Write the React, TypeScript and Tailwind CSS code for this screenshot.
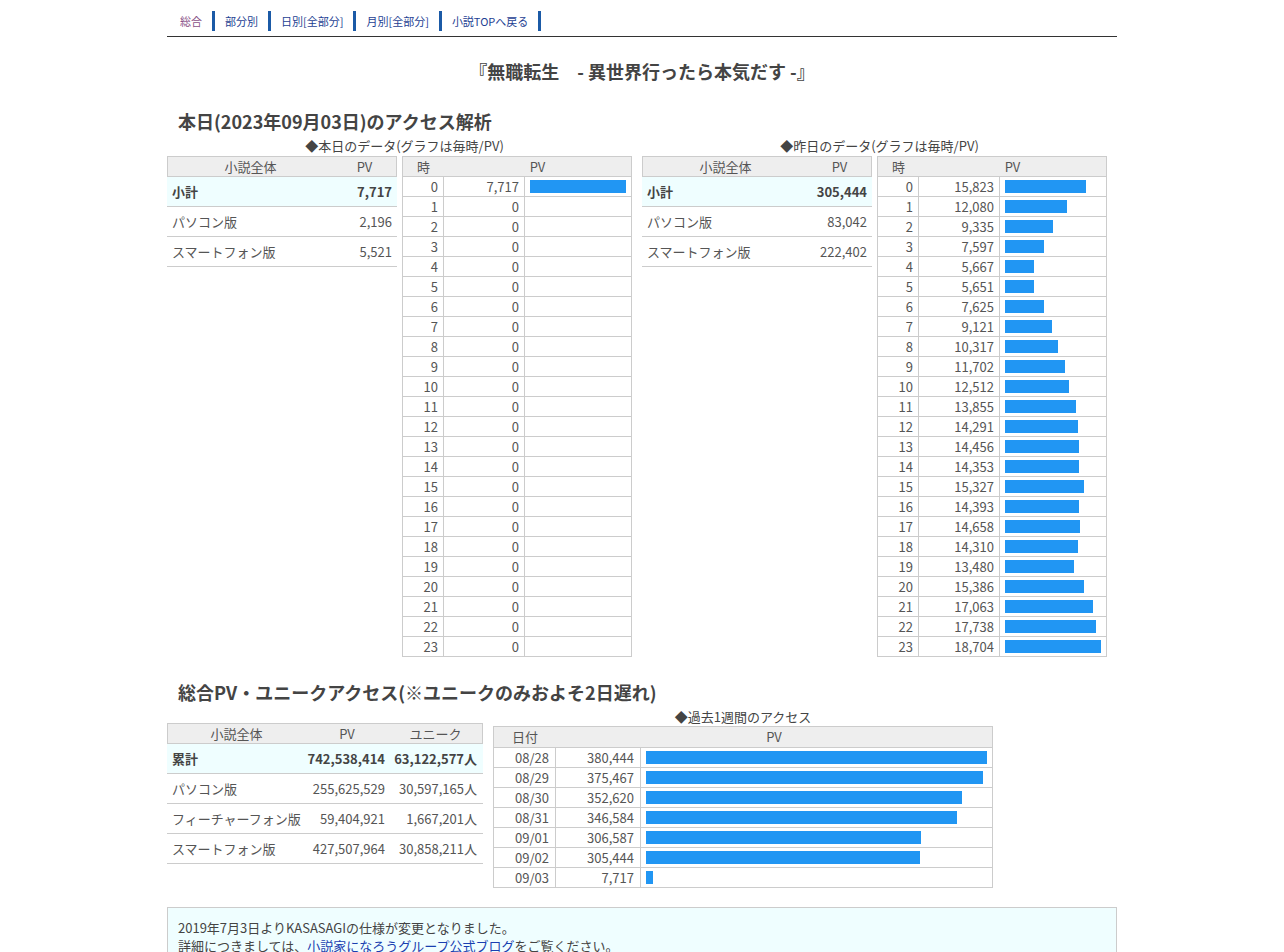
import React from "react";

const font = { fontFamily: '"Noto Sans CJK JP", "Noto Sans", sans-serif' };

const navItems = [
  { label: "総合", active: true },
  { label: "部分別" },
  { label: "日別[全部分]" },
  { label: "月別[全部分]" },
  { label: "小説TOPへ戻る" },
];

const todayHourly = [7717, ...Array(23).fill(0)];
const yesterdayHourly = [
  15823, 12080, 9335, 7597, 5667, 5651, 7625, 9121, 10317, 11702, 12512, 13855, 14291, 14456, 14353, 15327,
  14393, 14658, 14310, 13480, 15386, 17063, 17738, 18704,
];

const weekly = [
  { date: "08/28", pv: 380444 },
  { date: "08/29", pv: 375467 },
  { date: "08/30", pv: 352620 },
  { date: "08/31", pv: 346584 },
  { date: "09/01", pv: 306587 },
  { date: "09/02", pv: 305444 },
  { date: "09/03", pv: 7717 },
];

const fmt = (n: number) => n.toLocaleString("en-US");

type SummaryRow = { label: string; pv: string; bold?: boolean };

const SummaryTable = ({ rows }: { rows: SummaryRow[] }) => (
  <div className="w-[230px] shrink-0 text-[13px] text-[#555]">
    <div className="flex h-[21px] items-center border border-[#ccc] bg-[#eee]">
      <div className="w-[165px] text-center">小説全体</div>
      <div className="flex-1 text-center">PV</div>
    </div>
    {rows.map((r) => (
      <div
        key={r.label}
        className={`flex h-[30px] items-center border-b border-[#ccc] ${r.bold ? "bg-[#effeff] font-bold text-[#444]" : ""}`}
      >
        <div className="w-[165px] pl-[5px]">{r.label}</div>
        <div className="flex-1 pr-[5px] text-right">{r.pv}</div>
      </div>
    ))}
  </div>
);

const HourlyTable = ({ data }: { data: number[] }) => {
  const max = Math.max(...data);
  return (
    <div className="w-[230px] shrink-0 border-l border-t border-[#ccc] text-[13px] text-[#555]">
      <div className="flex h-[20px] items-center border-b border-r border-[#ccc] bg-[#eee]">
        <div className="w-[41px] text-center">時</div>
        <div className="flex-1 text-center">PV</div>
      </div>
      {data.map((v, i) => (
        <div key={i} className="flex h-[20px]">
          <div className="w-[41px] border-b border-r border-[#ccc] pr-[5px] text-right leading-[19px]">{i}</div>
          <div className="w-[81px] border-b border-r border-[#ccc] pr-[5px] text-right leading-[19px]">{fmt(v)}</div>
          <div className="flex flex-1 items-center border-b border-r border-[#ccc] pl-[5px]">
            {v > 0 && <div className="h-[13px] bg-[#2196f3]" style={{ width: `${(96 * v) / max}px` }} />}
          </div>
        </div>
      ))}
    </div>
  );
};

const DayBlock = ({ caption, rows, hourly }: { caption: string; rows: SummaryRow[]; hourly: number[] }) => (
  <div className="w-[475px]">
    <div className="mt-[2px] text-center text-[13px] leading-[20px] text-[#444]">{caption}</div>
    <div className="flex gap-[5px]">
      <SummaryTable rows={rows} />
      <HourlyTable data={hourly} />
    </div>
  </div>
);

export default function App() {
  const weekMax = Math.max(...weekly.map((w) => w.pv));
  return (
    <div className="min-h-screen bg-white" style={font}>
      <div className="mx-auto w-[950px] pb-10">
        <nav className="flex border-b border-[#333] pb-[5px] pl-[3px] pt-[11px] text-[11px]">
          {navItems.map((n) => (
            <a
              key={n.label}
              href="#"
              className={`block border-r-[3px] border-[#1b5aa6] px-[10px] leading-[20px] ${
                n.active ? "text-[#8a5288]" : "text-[#1e3f93]"
              }`}
            >
              {n.label}
            </a>
          ))}
        </nav>

        <h1 className="mt-[21px] text-center text-[18px] font-bold leading-[26px] text-[#444]">
          『無職転生　- 異世界行ったら本気だす -』
        </h1>

        <h2 className="ml-[11px] mt-[24px] text-[18px] font-bold leading-[26px] text-[#444]">
          本日(2023年09月03日)のアクセス解析
        </h2>

        <div className="flex">
          <DayBlock
            caption="◆本日のデータ(グラフは毎時/PV)"
            rows={[
              { label: "小計", pv: "7,717", bold: true },
              { label: "パソコン版", pv: "2,196" },
              { label: "スマートフォン版", pv: "5,521" },
            ]}
            hourly={todayHourly}
          />
          <DayBlock
            caption="◆昨日のデータ(グラフは毎時/PV)"
            rows={[
              { label: "小計", pv: "305,444", bold: true },
              { label: "パソコン版", pv: "83,042" },
              { label: "スマートフォン版", pv: "222,402" },
            ]}
            hourly={yesterdayHourly}
          />
        </div>

        <h2 className="ml-[11px] mt-[22px] text-[18px] font-bold leading-[26px] text-[#444]">
          総合PV・ユニークアクセス(※ユニークのみおよそ2日遅れ)
        </h2>

        <div className="flex items-start gap-[10px]">
          <div className="mt-[18px] w-[316px] shrink-0 text-[13px] text-[#555]">
            <div className="flex h-[21px] items-center border border-[#ccc] bg-[#eee]">
              <div className="w-[137px] text-center">小説全体</div>
              <div className="w-[84px] text-center">PV</div>
              <div className="flex-1 text-center">ユニーク</div>
            </div>
            {[
              { label: "累計", pv: "742,538,414", u: "63,122,577人", bold: true },
              { label: "パソコン版", pv: "255,625,529", u: "30,597,165人" },
              { label: "フィーチャーフォン版", pv: "59,404,921", u: "1,667,201人" },
              { label: "スマートフォン版", pv: "427,507,964", u: "30,858,211人" },
            ].map((r) => (
              <div
                key={r.label}
                className={`flex h-[30px] items-center border-b border-[#ccc] ${r.bold ? "bg-[#effeff] font-bold text-[#444]" : ""}`}
              >
                <div className="w-[137px] whitespace-nowrap pl-[5px]">{r.label}</div>
                <div className="w-[84px] pr-[3px] text-right">{r.pv}</div>
                <div className="flex-1 pr-[6px] text-right">{r.u}</div>
              </div>
            ))}
          </div>

          <div className="w-[500px]">
            <div className="mt-[3px] text-center text-[13px] leading-[18px] text-[#444]">◆過去1週間のアクセス</div>
            <div className="border-l border-t border-[#ccc] text-[13px] text-[#555]">
              <div className="flex h-[21px] items-center border-b border-r border-[#ccc] bg-[#eee]">
                <div className="w-[62px] text-center">日付</div>
                <div className="flex-1 text-center">PV</div>
              </div>
              {weekly.map((w) => (
                <div key={w.date} className="flex h-[20px]">
                  <div className="w-[62px] border-b border-r border-[#ccc] pr-[6px] text-right leading-[19px]">{w.date}</div>
                  <div className="w-[85px] border-b border-r border-[#ccc] pr-[6px] text-right leading-[19px]">
                    {fmt(w.pv)}
                  </div>
                  <div className="flex flex-1 items-center border-b border-r border-[#ccc] pl-[5px]">
                    <div className="h-[13px] bg-[#2196f3]" style={{ width: `${(341 * w.pv) / weekMax}px` }} />
                  </div>
                </div>
              ))}
            </div>
          </div>
        </div>

        <div className="mt-[19px] border border-[#ccc] bg-[#effeff] px-[10px] pb-[12px] pt-[11px] text-[13px] leading-[18px] text-[#444]">
          <p>2019年7月3日よりKASASAGIの仕様が変更となりました。</p>
          <p>
            詳細につきましては、
            <a href="#" className="text-[#1a3fb0]">
              小説家になろうグループ公式ブログ
            </a>
            をご覧ください。
          </p>
        </div>
      </div>
    </div>
  );
}
